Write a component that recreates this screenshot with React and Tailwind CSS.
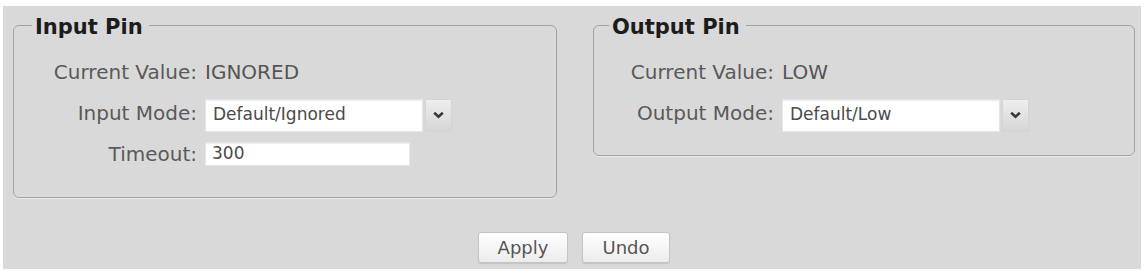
import React from "react";

const font = { fontFamily: '"DejaVu Sans", Verdana, sans-serif' };

function SelectBox({ value }) {
  return (
    <div className="flex items-stretch h-[33px] gap-[2px] mt-[4px]">
      <div className="w-[218px] bg-white border border-[#e6e6e6] shadow-[inset_0_1px_1px_rgba(0,0,0,0.08)] flex items-center pl-[7px] text-[17px] text-[#4a4a4a]">
        {value}
      </div>
      <div className="w-[27px] bg-gradient-to-b from-[#eeeeee] to-[#d6d6d6] border border-[#d4d4d4] flex items-center justify-center">
        <svg width="11" height="8" viewBox="0 0 11 8">
          <path d="M1.2 1.8 L5.5 5.8 L9.8 1.8" fill="none" stroke="#3a3a3a" strokeWidth="2.6" />
        </svg>
      </div>
    </div>
  );
}

function Row({ label, h, children, labelW }) {
  return (
    <div className={`flex items-center ${h}`}>
      <div className={`${labelW} text-right text-[20px] text-[#5a5a5a] pr-[8px] whitespace-nowrap`}>{label}</div>
      <div className="flex items-center">{children}</div>
    </div>
  );
}

export default function App() {
  return (
    <div className="w-[1148px] h-[275px] bg-white pt-[6px] pl-[3px] pr-[7px]" style={font}>
      <div className="h-[263px] bg-[#d9d9d9] flex flex-col">
        <div className="flex items-start pl-[10px] gap-[36px] mt-[6px]">
          <fieldset className="w-[544px] border border-[#a3a3a3] rounded-[6px] pt-[14px] pb-[23px] shadow-[0_1px_0_#e9e9e9]">
            <legend className="ml-[18px] pl-[3px] pr-[6px] text-[21px] leading-[26px] font-bold text-[#1c1c1c]"><span className="relative top-[2px]">Input Pin</span></legend>
            <Row label="Current Value:" h="h-[40px]" labelW="w-[191px]">
              <span className="text-[20px] text-[#555]">IGNORED</span>
            </Row>
            <Row label="Input Mode:" h="h-[42px]" labelW="w-[191px]">
              <SelectBox value="Default/Ignored" />
            </Row>
            <Row label="Timeout:" h="h-[40px]" labelW="w-[191px]">
              <div className="w-[205px] h-[24px] bg-white border border-[#e6e6e6] shadow-[inset_0_1px_1px_rgba(0,0,0,0.08)] flex items-center pl-[6px] text-[17px] text-[#4a4a4a]">300</div>
            </Row>
          </fieldset>
          <fieldset className="w-[542px] border border-[#a3a3a3] rounded-[6px] pt-[14px] pb-[21px] shadow-[0_1px_0_#e9e9e9]">
            <legend className="ml-[15px] pl-[3px] pr-[6px] text-[21px] leading-[26px] font-bold text-[#1c1c1c]"><span className="relative top-[2px]">Output Pin</span></legend>
            <Row label="Current Value:" h="h-[40px]" labelW="w-[188px]">
              <span className="text-[20px] text-[#555]">LOW</span>
            </Row>
            <Row label="Output Mode:" h="h-[42px]" labelW="w-[188px]">
              <SelectBox value="Default/Low" />
            </Row>
          </fieldset>
        </div>
        <div className="flex justify-center gap-[14px] mt-auto mb-[6px] pl-[4px]">
          <button className="w-[90px] h-[31px] rounded-[3px] border border-[#c4c4c4] bg-gradient-to-b from-white to-[#ececec] text-[18px] text-[#555] shadow-[0_1px_1px_rgba(0,0,0,0.1)]">Apply</button>
          <button className="w-[88px] h-[31px] rounded-[3px] border border-[#c4c4c4] bg-gradient-to-b from-white to-[#ececec] text-[18px] text-[#555] shadow-[0_1px_1px_rgba(0,0,0,0.1)]">Undo</button>
        </div>
      </div>
    </div>
  );
}
